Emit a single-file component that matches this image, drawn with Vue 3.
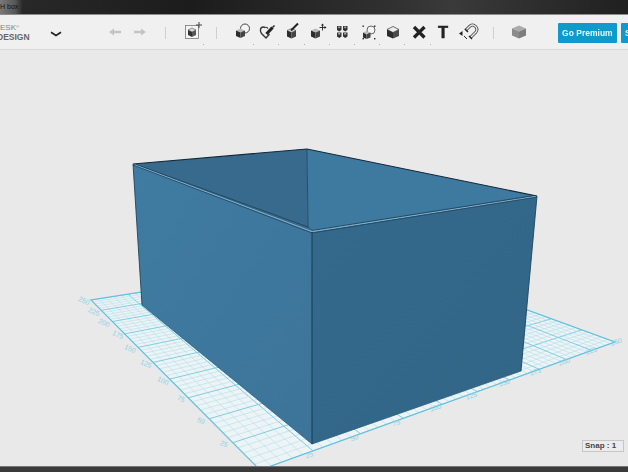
<script setup>
import { computed } from 'vue'

const p = [[260, 470], [615, 342], [377, 255], [91, 300]]
const dx1 = p[1][0] - p[2][0], dx2 = p[3][0] - p[2][0], sx = p[0][0] - p[1][0] + p[2][0] - p[3][0]
const dy1 = p[1][1] - p[2][1], dy2 = p[3][1] - p[2][1], sy = p[0][1] - p[1][1] + p[2][1] - p[3][1]
const den = dx1 * dy2 - dx2 * dy1
const g = (sx * dy2 - dx2 * sy) / den
const h = (dx1 * sy - sx * dy1) / den
const a = p[1][0] - p[0][0] + g * p[1][0]
const b = p[3][0] - p[0][0] + h * p[3][0]
const d = p[1][1] - p[0][1] + g * p[1][1]
const e = p[3][1] - p[0][1] + h * p[3][1]
const map = (u, v) => {
  const w = g * u + h * v + 1
  return [(a * u + b * v + p[0][0]) / w, (d * u + e * v + p[0][1]) / w]
}
const lines = computed(() => {
  const out = []
  for (let i = 0; i <= 50; i++) {
    const t = i / 50
    const major = i % 5 === 0
    const [x1, y1] = map(t, 0), [x2, y2] = map(t, 1)
    const [x3, y3] = map(0, t), [x4, y4] = map(1, t)
    out.push({ key: 'u' + i, x1, y1, x2, y2, major })
    out.push({ key: 'v' + i, x1: x3, y1: y3, x2: x4, y2: y4, major })
  }
  return out
})
const leftLabels = [
  ['25', 223, 446], ['50', 200, 423], ['75', 180, 401], ['100', 162, 383], ['125', 145, 366],
  ['150', 129, 351], ['175', 117, 337], ['200', 103, 325], ['225', 93, 314], ['250', 83, 303]
]
const rightLabels = [
  ['25', 310, 457], ['50', 355, 440], ['75', 397, 425], ['100', 436, 410], ['125', 472, 398],
  ['150', 505, 385], ['175', 536, 374], ['200', 565, 364], ['225', 592, 353], ['250', 617, 344]
]
</script>

<template>
  <div class="app">
    <div class="titlebar"><span class="tab">H box</span></div>
    <div class="toolbar">
      <div class="logo"><span class="l1">ESK<sup>®</sup></span><span class="l2">DESIGN</span></div>
      <svg class="chev" width="12" height="6" viewBox="0 0 12 6"><path d="M1 1.2 L6 4.4 L11 1.2" fill="none" stroke="#222" stroke-width="1.7"/></svg>

      <div class="undo">
        <svg width="14" height="10" viewBox="0 0 14 10"><path d="M1 5 L6 1.5 V3.8 H13 V6.2 H6 V8.5Z" fill="#c4c4c4"/></svg>
        <svg width="14" height="10" viewBox="0 0 14 10"><path d="M13 5 L8 1.5 V3.8 H1 V6.2 H8 V8.5Z" fill="#c4c4c4"/></svg>
      </div>
      <i class="sep s1"></i>

      <div class="slot d first"><svg width="24" height="24" viewBox="0 0 24 24">
        <rect x="5.5" y="5.5" width="13" height="13" fill="#f4f4f4" stroke="#777" stroke-width="0.8"/>
        <path d="M8 10 L12 8 L16 10 L12 12Z" fill="#ddd" stroke="#333" stroke-width=".5"/>
        <path d="M8 10 L12 12 V17 L8 15Z" fill="#333"/><path d="M16 10 L12 12 V17 L16 15Z" fill="#555"/>
        <path d="M19 2 V8 M16 5 H22" stroke="#444" stroke-width="1"/>
      </svg></div>
      <i class="sep s2"></i>

      <div class="group">
        <div class="slot d"><svg width="24" height="24" viewBox="0 0 24 24">
          <circle cx="15" cy="8.5" r="4.5" fill="#f4f4f4" stroke="#444" stroke-width="1"/>
          <path d="M6 10.5 L10.5 8.5 L15 10.5 L10.5 12.5Z" fill="#bbb"/><path d="M6 10.5 L10.5 12.5 V18 L6 16Z" fill="#2c2c2c"/><path d="M15 10.5 L10.5 12.5 V18 L15 16Z" fill="#444"/>
        </svg></div>
        <div class="slot d"><svg width="24" height="24" viewBox="0 0 24 24">
          <path d="M10 7.5 C5 5.5 4.5 11 6.5 13.5 L11 18 L14.5 14" fill="none" stroke="#333" stroke-width="1.4"/>
          <path d="M10 7.5 C11 7 12 7.5 13 8.5" fill="none" stroke="#333" stroke-width="1.1"/>
          <path d="M11.5 14 L17.5 7.5" stroke="#222" stroke-width="3.2"/>
          <path d="M17.5 7.5 L19.5 5.5" stroke="#222" stroke-width="1.5"/>
        </svg></div>
        <div class="slot d"><svg width="24" height="24" viewBox="0 0 24 24">
          <path d="M7 10.5 L11.5 8.5 L16 10.5 L11.5 12.5Z" fill="#ddd" stroke="#333" stroke-width=".5"/>
          <path d="M7 10.5 L11.5 12.5 V18.5 L7 16.5Z" fill="#2c2c2c"/><path d="M16 10.5 L11.5 12.5 V18.5 L16 16.5Z" fill="#444"/>
          <path d="M11 10.5 L18 3.5" stroke="#222" stroke-width="2"/>
        </svg></div>
        <div class="slot d"><svg width="24" height="24" viewBox="0 0 24 24">
          <path d="M6 10.5 L10.5 8.5 L15 10.5 L10.5 12.5Z" fill="#bbb"/><path d="M6 10.5 L10.5 12.5 V18.5 L6 16.5Z" fill="#2c2c2c"/><path d="M15 10.5 L10.5 12.5 V18.5 L15 16.5Z" fill="#444"/>
          <path d="M17.5 4.5 V10.5 M14.5 7.5 H20.5" stroke="#222" stroke-width=".9"/>
          <path d="M17.5 3.5 L16 5.5 H19Z M21.5 7.5 L19.5 6 V9Z" fill="#222"/>
        </svg></div>
        <div class="slot d"><svg width="24" height="24" viewBox="0 0 24 24">
          <g fill="#333"><path d="M7 6 H11.5 V10 L9.2 11.5 L7 10Z"/><path d="M13 6 H17.5 V10 L15.2 11.5 L13 10Z"/><path d="M7 12.5 H11.5 V16.5 L9.2 18 L7 16.5Z"/><path d="M13 12.5 H17.5 V16.5 L15.2 18 L13 16.5Z"/></g>
          <g fill="#aaa"><rect x="8.2" y="6.5" width="2" height="1.6"/><rect x="14.2" y="6.5" width="2" height="1.6"/><rect x="8.2" y="13" width="2" height="1.6"/><rect x="14.2" y="13" width="2" height="1.6"/></g>
        </svg></div>
        <div class="slot d"><svg width="24" height="24" viewBox="0 0 24 24">
          <circle cx="15" cy="10" r="4" fill="#f4f4f4" stroke="#555" stroke-width=".9"/>
          <path d="M7 12.5 L10.5 11 L14.5 12.5 L10.5 14.5Z" fill="#bbb"/><path d="M7 12.5 L10.5 14.5 V19 L7 17.5Z" fill="#2c2c2c"/><path d="M14.5 12.5 L10.5 14.5 V19 L14.5 17.5Z" fill="#444"/>
          <g fill="#222"><rect x="6.5" y="5.5" width="1.4" height="1.4"/><rect x="18" y="5.5" width="1.4" height="1.4"/><rect x="6.5" y="18" width="1.4" height="1.4"/><rect x="18" y="18" width="1.4" height="1.4"/></g>
        </svg></div>
        <div class="slot d"><svg width="24" height="24" viewBox="0 0 24 24">
          <path d="M6 9.5 L12 6.5 L18 9.5 L12 12.5Z" fill="#eee" stroke="#333" stroke-width=".7"/>
          <path d="M6 9.5 L12 12.5 V18.5 L6 16Z" fill="#2c2c2c"/><path d="M18 9.5 L12 12.5 V18.5 L18 16Z" fill="#4a4a4a"/>
        </svg></div>
        <div class="slot d"><svg width="24" height="24" viewBox="0 0 24 24"><path d="M8 7 L18.5 17.5 M18.5 7 L8 17.5" stroke="#222" stroke-width="3.2"/></svg></div>
        <div class="slot t">T</div>
        <div class="slot"><svg width="24" height="24" viewBox="0 0 24 24">
          <path d="M9.5 10.5 L14 6 A4.3 4.3 0 0 1 20 12 L14.5 17.5" fill="none" stroke="#444" stroke-width="3"/>
          <path d="M9.5 10.5 L14 6 A4.3 4.3 0 0 1 20 12 L14.5 17.5" fill="none" stroke="#f0f0f0" stroke-width="1.3"/>
          <path d="M9 9 L12 12 M13 16 L16 19" stroke="#222" stroke-width="1.4"/>
          <path d="M6.5 11 L3 13.5 L6.5 16 Z" fill="#222"/>
          <path d="M8 16 L11 19" stroke="#222" stroke-width="1"/>
        </svg></div>
      </div>
      <i class="sep s3"></i>

      <svg class="view" width="24" height="24" viewBox="0 0 24 24">
        <path d="M5 8.5 L12 5.5 L19 8.5 L12 11.5Z" fill="#ababab"/>
        <path d="M5 8.5 L12 11.5 V18.5 L5 15.5Z" fill="#8b8b8b"/><path d="M19 8.5 L12 11.5 V18.5 L19 15.5Z" fill="#7d7d7d"/>
      </svg>

      <button class="btn premium">Go Premium</button>
      <button class="btn next">S</button>
    </div>

    <div class="canvas">
      <svg class="scene" width="628" height="416" viewBox="0 50 628 416">
        <defs>
          <clipPath id="grid-clip"><polygon points="260,470 615,342 377,255 91,300"/></clipPath>
          <linearGradient id="leftFace" x1="0" y1="0" x2="1" y2="1">
            <stop offset="0" stop-color="#3f7ba2"/><stop offset="1" stop-color="#3d7499"/>
          </linearGradient>
          <linearGradient id="rightFace" x1="0" y1="0" x2="1" y2="1">
            <stop offset="0" stop-color="#34698c"/><stop offset="1" stop-color="#326687"/>
          </linearGradient>
        </defs>
        <polygon points="260,470 615,342 377,255 91,300" fill="#ecf4f6"/>
        <g clip-path="url(#grid-clip)">
          <line v-for="l in lines" :key="l.key" :x1="l.x1" :y1="l.y1" :x2="l.x2" :y2="l.y2"
            :class="l.major ? 'major' : 'minor'"/>
        </g>
        <polygon class="edge" points="260,470 615,342 377,255 91,300"/>
        <g class="labels">
          <text v-for="t in leftLabels" :key="'l' + t[0]" :x="t[1]" :y="t[2]" :transform="`rotate(24 ${t[1]} ${t[2]})`">{{ t[0] }}</text>
          <text v-for="t in rightLabels" :key="'r' + t[0]" :x="t[1]" :y="t[2]" :transform="`rotate(-18 ${t[1]} ${t[2]})`">{{ t[0] }}</text>
        </g>

        <polygon points="133,164 307,149 308,227 312,232" fill="#376a8c"/>
        <polygon points="307,149 537,196 312,232 308,227" fill="#3e799f"/>
        <polygon points="133,164 312,232 312,444 142,305" fill="url(#leftFace)"/>
        <polygon points="312,232 537,196 521,371 312,444" fill="url(#rightFace)"/>

        <path d="M133 164 L307 149 L537 196" fill="none" stroke="#12293a" stroke-width="1.1"/>
        <path d="M307 149 L308 227" fill="none" stroke="#234d69" stroke-width="1"/>
        <path d="M136 164.5 L308 227 L312 230.5 L534 195.5" fill="none" stroke="#1d4058" stroke-width=".8"/>
        <path d="M135 165 L312 231.5 L536 196.5" fill="none" stroke="#8fb9d2" stroke-width=".8"/>
        <path d="M133 165 L312 233 L537 197" fill="none" stroke="#1d4058" stroke-width=".7"/>
        <path d="M133 164 L142 305" fill="none" stroke="#1f445c" stroke-width=".9"/>
        <path d="M142 305 L312 444 L521 371" fill="none" stroke="#2a5a79" stroke-width=".8"/>
        <path d="M521 371 L537 196" fill="none" stroke="#1f445c" stroke-width=".9"/>
        <path d="M312 232 V444" stroke="#173a52" stroke-width="1"/>
      </svg>
      <div class="snap">Snap : 1</div>
    </div>
    <div class="bottombar"></div>
  </div>
</template>

<style scoped>
.app {
  width: 628px;
  height: 472px;
  display: flex;
  flex-direction: column;
  overflow: hidden;
  background: #e9e9e9;
  font-family: "Liberation Sans", Arial, sans-serif;
}
.titlebar {
  height: 14px;
  flex: none;
  background: linear-gradient(90deg, #2a2a2a 0%, #1c1c1c 30%, #303030 62%, #3a3a3a 72%, #202020 100%);
  border-bottom: 1px solid #8d8d8d;
}
.tab {
  display: inline-block;
  height: 14px;
  padding: 0 4px 0 0;
  background: linear-gradient(90deg, #7a7a7a, #565656 70%, #2c2c2c);
  color: #111;
  font-size: 7px;
  line-height: 14px;
  vertical-align: top;
}
.toolbar {
  height: 35px;
  flex: none;
  display: flex;
  align-items: center;
  background: #f0f0f0;
  border-bottom: 1px solid #dadada;
  box-sizing: border-box;
  filter: blur(0.35px);
}
.logo {
  width: 50px;
  flex: none;
  display: flex;
  flex-direction: column;
  margin-top: 2px;
  color: #666;
  overflow: hidden;
}
.l1 { font-size: 8px; line-height: 8px; color: #808080; }
.l1 sup { font-size: 4px; vertical-align: top; line-height: 6px; }
.l2 { font-size: 8.5px; line-height: 10px; font-weight: bold; margin-left: -3px; }
.chev { flex: none; margin-top: 3px; }
.undo { display: flex; gap: 11px; margin-left: 46px; flex: none; }
.sep { display: block; width: 1px; height: 12px; background: #d0d0d0; flex: none; margin-top: 1px; }
.s1 { margin-left: 18px; }
.s2 { margin-left: 12px; }
.first { width: 24px; margin-left: 14px; }
.group { display: flex; flex: none; margin-left: 12px; }
.slot {
  position: relative;
  width: 25.2px;
  height: 24px;
  display: flex;
  align-items: center;
  justify-content: center;
  flex: none;
}
.slot.first { width: 24px; }
.d::after {
  content: "";
  position: absolute;
  right: 0;
  bottom: -1px;
  width: 1px;
  height: 1px;
  background: #aaa;
}
.t { font-size: 16.5px; font-weight: bold; color: #222; line-height: 24px; -webkit-text-stroke: 0.5px #222; }
.s3 { margin-left: 12px; }
.view { flex: none; margin-left: 13.5px; }
.btn {
  border: 0;
  padding: 0;
  height: 20px;
  margin-top: 1px;
  border-radius: 1px;
  background: #0e9bcc;
  color: #e6f6fb;
  font: bold 8.5px "Liberation Sans", Arial, sans-serif;
  flex: none;
}
.premium { width: 59px; margin-left: 26.5px; }
.next {
  width: 20px;
  margin-left: 4px;
  text-align: left;
  padding-left: 4px;
}
.canvas { position: relative; flex: 1; min-height: 0; background: #e9e9e9; overflow: hidden; }
.scene { display: block; }
.major { stroke: #7fcde3; stroke-width: 1; }
.minor { stroke: #b6deea; stroke-width: 0.6; }
.edge { fill: none; stroke: #62c0dd; stroke-width: 1.2; }
.labels text { font-size: 7px; fill: #8fd3e6; text-anchor: middle; font-family: "Liberation Sans", Arial, sans-serif; }
.snap {
  position: absolute;
  right: 4px;
  bottom: 14px;
  width: 38px;
  height: 10px;
  border: 1px solid #c6c6c6;
  background: #ececec;
  color: #444;
  font-size: 8px;
  font-weight: bold;
  line-height: 10px;
  padding-left: 2px;
}
.bottombar {
  height: 6px;
  flex: none;
  background: #3a3a3a;
  border-top: 1px solid #777;
  box-sizing: border-box;
}
</style>
